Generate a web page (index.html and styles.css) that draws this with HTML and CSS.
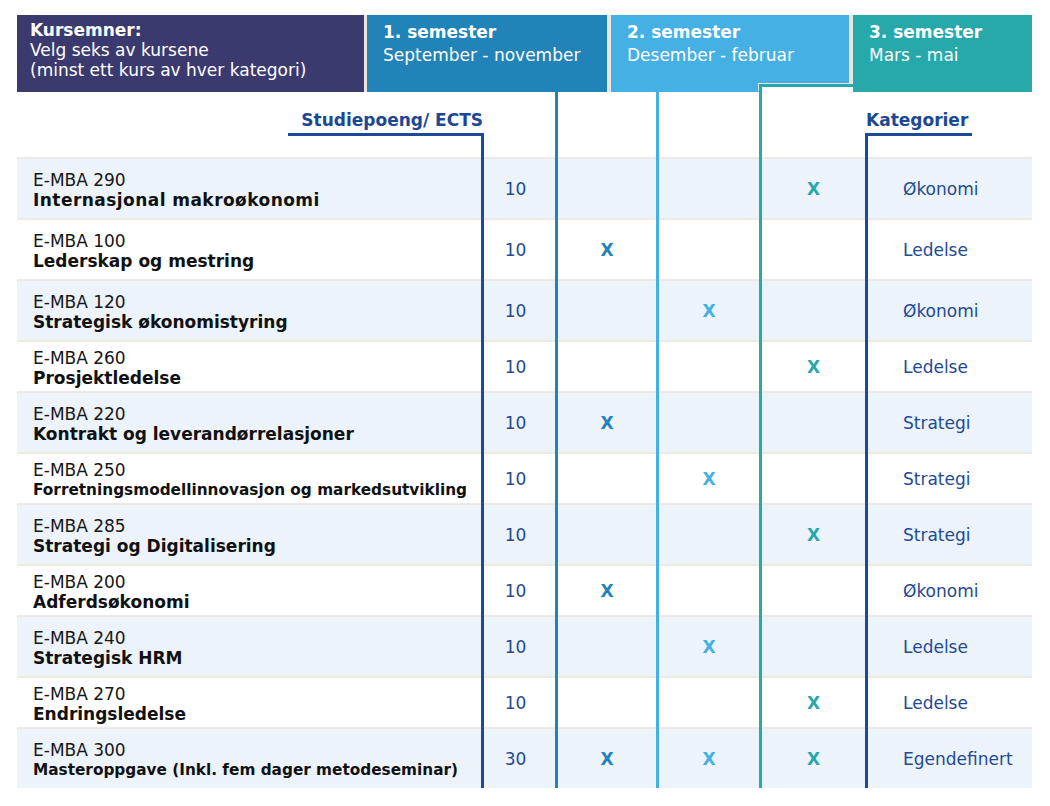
FILE: index.html
```html
<!DOCTYPE html>
<html lang="no">
<head>
<meta charset="utf-8">
<title>E-MBA kursemner</title>
<link rel="stylesheet" href="styles.css">
</head>
<body>
<main class="plan">
  <header class="heads">
    <div class="head head-courses"><strong>Kursemner:</strong><span>Velg seks av kursene</span><span>(minst ett kurs av hver kategori)</span></div>
    <div class="head head-s1"><strong>1. semester</strong><span>September - november</span></div>
    <div class="head head-s2"><strong>2. semester</strong><span>Desember - februar</span></div>
    <div class="head head-s3"><strong>3. semester</strong><span>Mars - mai</span></div>
  </header>

  <div class="grid subhead">
    <div class="c-name"><span class="label-ects">Studiepoeng/ ECTS</span></div>
    <div class="c-ects"></div>
    <div class="c-s1"></div>
    <div class="c-s2"></div>
    <div class="c-s3"></div>
    <div class="c-cat"><span class="label-cat">Kategorier</span><span class="cat-bracket"></span></div>
  </div>

  <div class="grid row alt">
    <div class="c-name"><span class="code">E-MBA 290</span><span class="title spaced">Internasjonal makroøkonomi</span></div>
    <div class="c-ects">10</div><div class="c-s1"></div><div class="c-s2"></div><div class="c-s3">X</div>
    <div class="c-cat">Økonomi</div>
  </div>
  <div class="grid row">
    <div class="c-name"><span class="code">E-MBA 100</span><span class="title">Lederskap og mestring</span></div>
    <div class="c-ects">10</div><div class="c-s1">X</div><div class="c-s2"></div><div class="c-s3"></div>
    <div class="c-cat">Ledelse</div>
  </div>
  <div class="grid row alt">
    <div class="c-name"><span class="code">E-MBA 120</span><span class="title">Strategisk økonomistyring</span></div>
    <div class="c-ects">10</div><div class="c-s1"></div><div class="c-s2">X</div><div class="c-s3"></div>
    <div class="c-cat">Økonomi</div>
  </div>
  <div class="grid row short">
    <div class="c-name"><span class="code">E-MBA 260</span><span class="title">Prosjektledelse</span></div>
    <div class="c-ects">10</div><div class="c-s1"></div><div class="c-s2"></div><div class="c-s3">X</div>
    <div class="c-cat">Ledelse</div>
  </div>
  <div class="grid row alt">
    <div class="c-name"><span class="code">E-MBA 220</span><span class="title">Kontrakt og leverandørrelasjoner</span></div>
    <div class="c-ects">10</div><div class="c-s1">X</div><div class="c-s2"></div><div class="c-s3"></div>
    <div class="c-cat">Strategi</div>
  </div>
  <div class="grid row short">
    <div class="c-name"><span class="code">E-MBA 250</span><span class="title small">Forretningsmodellinnovasjon og markedsutvikling</span></div>
    <div class="c-ects">10</div><div class="c-s1"></div><div class="c-s2">X</div><div class="c-s3"></div>
    <div class="c-cat">Strategi</div>
  </div>
  <div class="grid row alt">
    <div class="c-name"><span class="code">E-MBA 285</span><span class="title">Strategi og Digitalisering</span></div>
    <div class="c-ects">10</div><div class="c-s1"></div><div class="c-s2"></div><div class="c-s3">X</div>
    <div class="c-cat">Strategi</div>
  </div>
  <div class="grid row short">
    <div class="c-name"><span class="code">E-MBA 200</span><span class="title">Adferdsøkonomi</span></div>
    <div class="c-ects">10</div><div class="c-s1">X</div><div class="c-s2"></div><div class="c-s3"></div>
    <div class="c-cat">Økonomi</div>
  </div>
  <div class="grid row alt">
    <div class="c-name"><span class="code">E-MBA 240</span><span class="title">Strategisk HRM</span></div>
    <div class="c-ects">10</div><div class="c-s1"></div><div class="c-s2">X</div><div class="c-s3"></div>
    <div class="c-cat">Ledelse</div>
  </div>
  <div class="grid row short">
    <div class="c-name"><span class="code">E-MBA 270</span><span class="title">Endringsledelse</span></div>
    <div class="c-ects">10</div><div class="c-s1"></div><div class="c-s2"></div><div class="c-s3">X</div>
    <div class="c-cat">Ledelse</div>
  </div>
  <div class="grid row alt">
    <div class="c-name"><span class="code">E-MBA 300</span><span class="title small">Masteroppgave (Inkl. fem dager metodeseminar)</span></div>
    <div class="c-ects">30</div><div class="c-s1">X</div><div class="c-s2">X</div><div class="c-s3">X</div>
    <div class="c-cat">Egendefinert</div>
  </div>
</main>
</body>
</html>
```

FILE: styles.css
```css
* {
  box-sizing: border-box;
  margin: 0;
  padding: 0;
}

body {
  background: #ffffff;
  font-family: "DejaVu Sans", Verdana, sans-serif;
  color: #141414;
}

.plan {
  width: 1015px;
  margin: 15px 0 0 17px;
}

/* ---------- header boxes ---------- */
.heads {
  display: flex;
  height: 77px;
  background: #ebe5de;
}

.head {
  position: relative;
  color: #ffffff;
  font-size: 17px;
  line-height: 20px;
  padding: 7px 16px 0;
}

.head strong,
.head span {
  display: block;
  white-space: nowrap;
}

.head strong {
  font-weight: bold;
}

.head span {
  margin-top: 3px;
}

.head-courses {
  width: 347px;
  background: #3b3a6e;
  padding: 5px 13px 0;
}

.head-courses span {
  margin-top: 0;
}

.head-s1 {
  width: 240px;
  margin-left: 3px;
  background: #2183b7;
}

.head-s2 {
  width: 238px;
  margin-left: 4px;
  background: #44b0e4;
}

.head-s3 {
  width: 179px;
  margin-left: 4px;
  background: #27a8aa;
}

/* teal step where the 3rd semester line starts */
.head-s2::after {
  content: "";
  position: absolute;
  left: 148px;
  right: -4px;
  bottom: 0;
  height: 5px;
  background: #ffffff;
  border-top: 3px solid #27a8aa;
  border-left: 3px solid #27a8aa;
  box-shadow: -1px -1px 0 #e9e3dc;
}

/* ---------- grid ---------- */
.grid {
  display: grid;
  grid-template-columns: 464px 74px 101px 103px 106px 167px;
}

.c-ects {
  border-left: 3px solid #1c4a97;
}

.c-s1 {
  border-left: 3px solid #2183b7;
}

.c-s2 {
  border-left: 3px solid #44b0e4;
}

.c-s3 {
  border-left: 3px solid #27a8aa;
}

.c-cat {
  border-left: 3px solid #1c4a97;
}

/* ---------- sub header ---------- */
.subhead {
  height: 65px;
}

.subhead .c-name {
  display: flex;
  justify-content: flex-end;
  align-items: flex-end;
  padding-bottom: 21px;
}

.label-ects {
  width: 196px;
  margin-right: -3px;
  text-align: right;
  padding-right: 1px;
  font-size: 17px;
  line-height: 20px;
  font-weight: bold;
  color: #1b4795;
  padding-bottom: 3px;
  border-bottom: 3px solid #1c4a97;
  white-space: nowrap;
}

.subhead .c-ects {
  align-self: end;
  height: 24px;
}

.subhead .c-cat {
  border-left: 0;
  display: flex;
  flex-direction: column;
  justify-content: flex-end;
}

.label-cat {
  font-size: 17px;
  line-height: 20px;
  font-weight: bold;
  color: #1b4795;
  padding-left: 1px;
  padding-bottom: 3px;
}

.cat-bracket {
  display: block;
  width: 107px;
  height: 24px;
  border-top: 3px solid #1c4a97;
  border-left: 3px solid #1c4a97;
}

/* ---------- rows ---------- */
.row {
  height: 61px;
  background: linear-gradient(#eee9e3, #eee9e3) top / 100% 2px no-repeat, #ffffff;
}

.row.alt {
  background: linear-gradient(#eee9e3, #eee9e3) top / 100% 2px no-repeat, #ecf3fb;
}

.row.short {
  height: 51px;
}

.row .c-name {
  display: flex;
  flex-direction: column;
  justify-content: center;
  padding: 5px 0 0 16px;
}

.code {
  font-size: 17px;
  line-height: 20px;
  color: #161616;
  white-space: nowrap;
}

.title {
  font-size: 17px;
  line-height: 20px;
  font-weight: bold;
  color: #111111;
  white-space: nowrap;
}

.title.spaced {
  letter-spacing: 0.45px;
}

.title.small {
  font-size: 15.3px;
}

.row .c-ects,
.row .c-s1,
.row .c-s2,
.row .c-s3 {
  display: flex;
  align-items: center;
  justify-content: center;
  padding-top: 3px;
  font-size: 17px;
}

.row .c-ects {
  color: #1f4a94;
  padding-right: 8px;
}

.row .c-s1,
.row .c-s2,
.row .c-s3 {
  font-weight: bold;
}

.row .c-s1 {
  color: #2183b7;
}

.row .c-s2 {
  color: #44b0e4;
}

.row .c-s3 {
  color: #27a8aa;
}

.row .c-cat {
  display: flex;
  align-items: center;
  padding: 3px 0 0 35px;
  font-size: 17px;
  color: #1f4a94;
}
```
